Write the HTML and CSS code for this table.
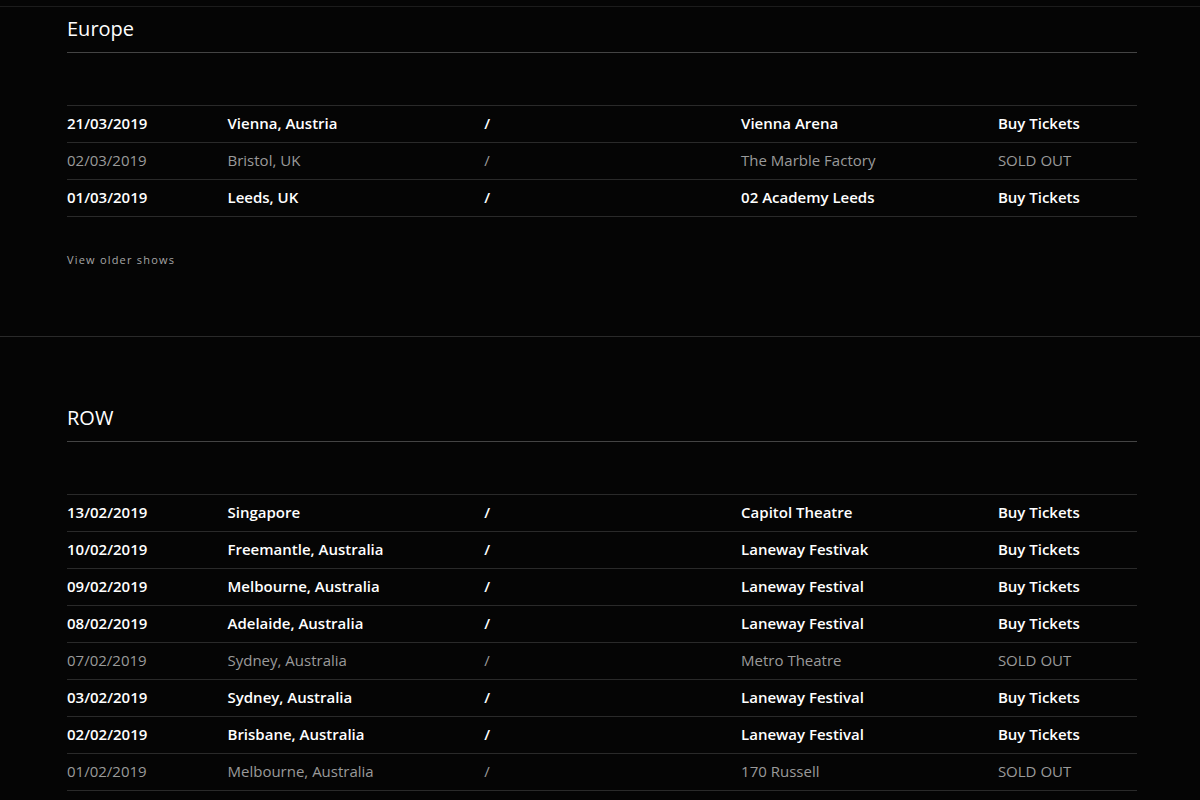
FILE: index.html
```html
<!DOCTYPE html>
<html lang="en">
<head>
<meta charset="utf-8">
<title>Tour Dates</title>
<link rel="stylesheet" href="styles.css">
</head>
<body>
<div class="topbar"></div>
<section class="region region-first">
  <h2 class="region-title">Europe</h2>
  <div class="shows">
    <div class="show"><span>21/03/2019</span><span>Vienna, Austria</span><span>/</span><span>Vienna Arena</span><span>Buy Tickets</span></div>
    <div class="show sold"><span>02/03/2019</span><span>Bristol, UK</span><span>/</span><span>The Marble Factory</span><span>SOLD OUT</span></div>
    <div class="show"><span>01/03/2019</span><span>Leeds, UK</span><span>/</span><span>02 Academy Leeds</span><span>Buy Tickets</span></div>
  </div>
  <a class="older" href="#">View older shows</a>
</section>
<section class="region">
  <h2 class="region-title">ROW</h2>
  <div class="shows">
    <div class="show"><span>13/02/2019</span><span>Singapore</span><span>/</span><span>Capitol Theatre</span><span>Buy Tickets</span></div>
    <div class="show"><span>10/02/2019</span><span>Freemantle, Australia</span><span>/</span><span>Laneway Festivak</span><span>Buy Tickets</span></div>
    <div class="show"><span>09/02/2019</span><span>Melbourne, Australia</span><span>/</span><span>Laneway Festival</span><span>Buy Tickets</span></div>
    <div class="show"><span>08/02/2019</span><span>Adelaide, Australia</span><span>/</span><span>Laneway Festival</span><span>Buy Tickets</span></div>
    <div class="show sold"><span>07/02/2019</span><span>Sydney, Australia</span><span>/</span><span>Metro Theatre</span><span>SOLD OUT</span></div>
    <div class="show"><span>03/02/2019</span><span>Sydney, Australia</span><span>/</span><span>Laneway Festival</span><span>Buy Tickets</span></div>
    <div class="show"><span>02/02/2019</span><span>Brisbane, Australia</span><span>/</span><span>Laneway Festival</span><span>Buy Tickets</span></div>
    <div class="show sold"><span>01/02/2019</span><span>Melbourne, Australia</span><span>/</span><span>170 Russell</span><span>SOLD OUT</span></div>
  </div>
</section>
</body>
</html>
```
FILE: styles.css
```css
html, body {
  margin: 0;
  padding: 0;
  background: #050505;
  color: #fff;
  font-family: "Open Sans", "Noto Sans", sans-serif;
  overflow: hidden;
}
.topbar {
  height: 6px;
  border-bottom: 1px solid #1c1c1c;
}
.region {
  padding: 69px 63px 69px 67px;
  border-top: 1px solid #2a2a2a;
}
.region-first {
  padding-top: 10px;
  border-top: none;
}
.region-title {
  margin: 0;
  font-size: 20px;
  line-height: 24px;
  font-weight: 400;
  padding-bottom: 11px;
  border-bottom: 1px solid #444;
}
.shows {
  margin-top: 52px;
  border-top: 1px solid #2a2a2a;
}
.show {
  display: grid;
  grid-template-columns: 15% 24% 24% 24% 13%;
  box-sizing: border-box;
  height: 37px;
  padding-bottom: 2px;
  align-items: center;
  border-bottom: 1px solid #2a2a2a;
  font-size: 15px;
  font-weight: 600;
  color: #fff;
}
.show.sold {
  font-weight: 400;
  color: #9a9a9a;
}
.older {
  display: block;
  margin-top: 36px;
  font-size: 11px;
  line-height: 14px;
  letter-spacing: 1.2px;
  color: #a5a5a5;
  text-decoration: none;
}
```
